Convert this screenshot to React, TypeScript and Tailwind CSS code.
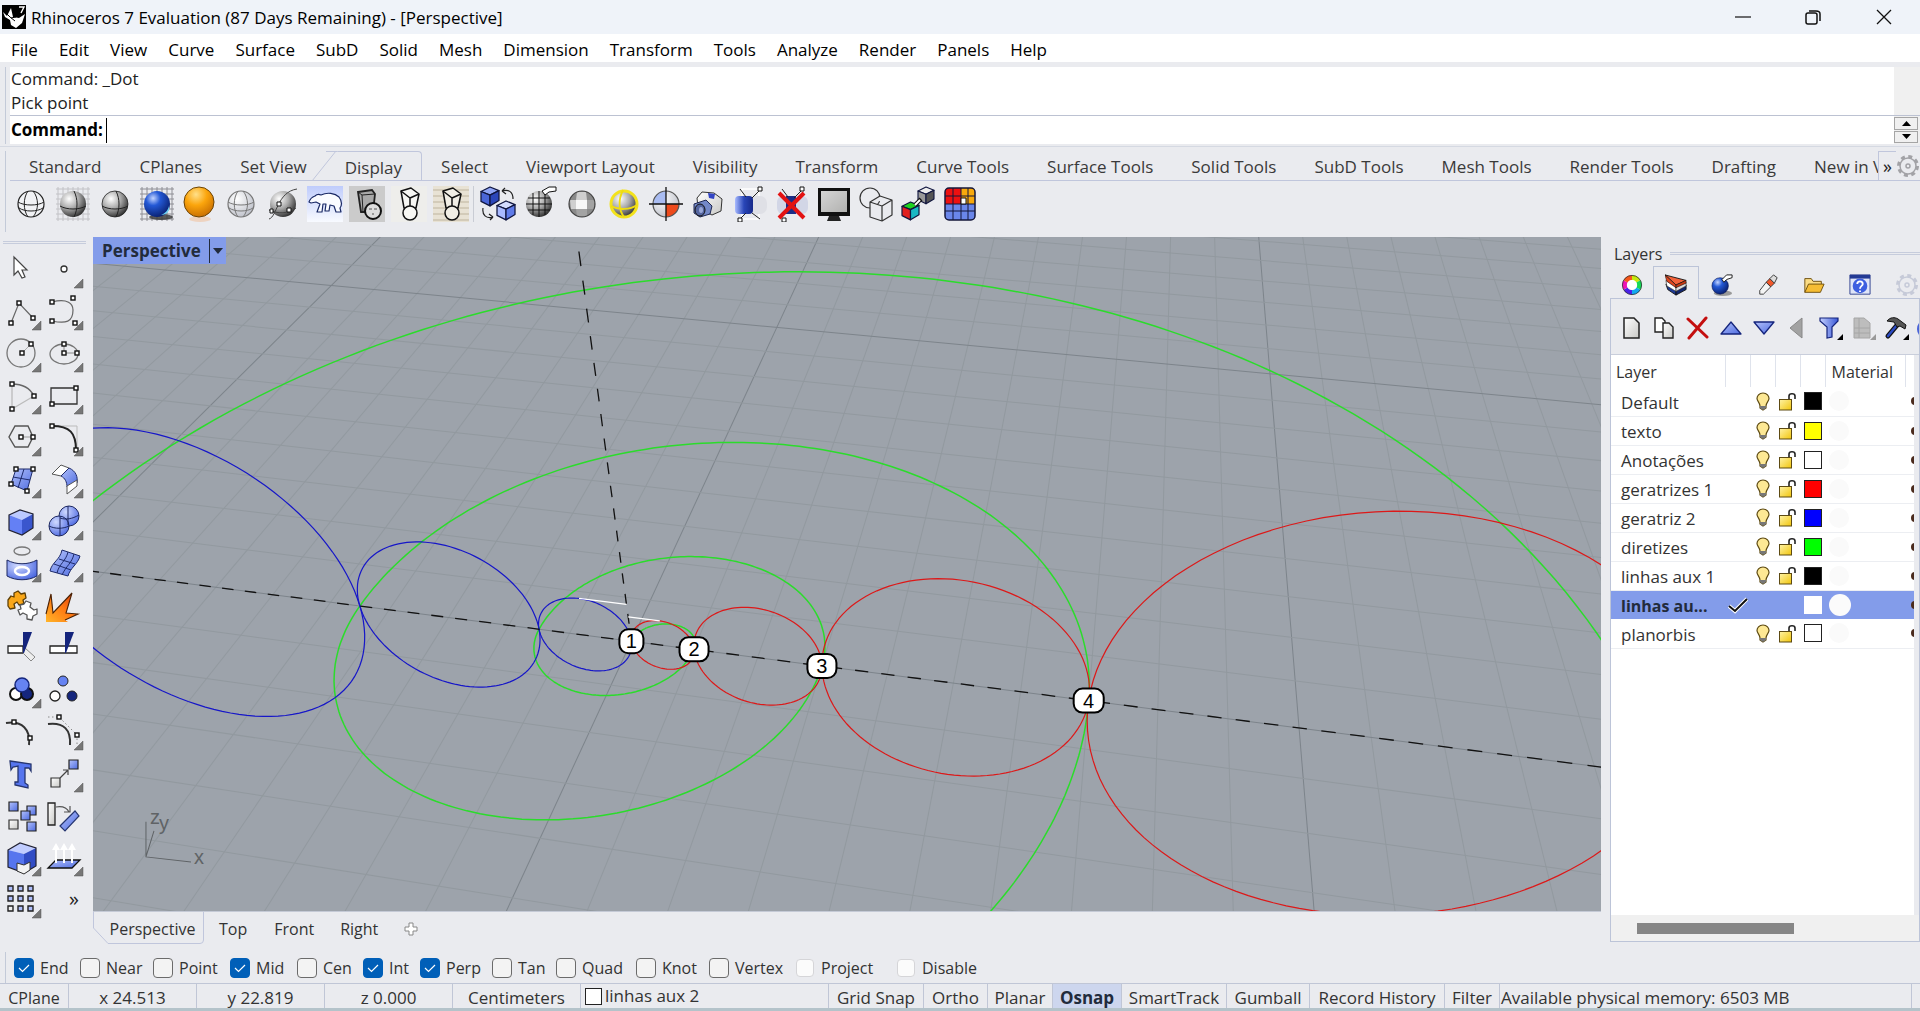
import React from 'react';

type IconProps = { children: React.ReactNode; size?: string; box?: string };

const Glyph: React.FC<IconProps> = ({ children, size = 'w-9 h-9', box = '0 0 36 36' }) => (
  <svg className={`${size} shrink-0`} viewBox={box} fill="none" aria-hidden="true">
    {children}
  </svg>
);

const Gradients: React.FC = () => (
  <svg className="absolute w-0 h-0" aria-hidden="true">
    <defs>
      <radialGradient id="gray" cx="0.35" cy="0.3" r="0.75">
        <stop offset="0" stopColor="#fff" />
        <stop offset="0.5" stopColor="#a9a9a9" />
        <stop offset="1" stopColor="#2c2c2c" />
      </radialGradient>
      <radialGradient id="blueBall" cx="0.35" cy="0.28" r="0.8">
        <stop offset="0" stopColor="#c3d4ff" />
        <stop offset="0.35" stopColor="#2459d6" />
        <stop offset="1" stopColor="#061a66" />
      </radialGradient>
      <radialGradient id="orangeBall" cx="0.4" cy="0.25" r="0.8">
        <stop offset="0" stopColor="#ffe08a" />
        <stop offset="0.45" stopColor="#fba50c" />
        <stop offset="1" stopColor="#c56a00" />
      </radialGradient>
      <radialGradient id="soft" cx="0.35" cy="0.3" r="0.8">
        <stop offset="0" stopColor="#fff" />
        <stop offset="1" stopColor="#b9bcc6" />
      </radialGradient>
      <radialGradient id="peri" cx="0.35" cy="0.3" r="0.8">
        <stop offset="0" stopColor="#cfd9ff" />
        <stop offset="1" stopColor="#4764e0" />
      </radialGradient>
      <linearGradient id="face" x1="0" y1="0" x2="1" y2="1">
        <stop offset="0" stopColor="#b4c2fb" />
        <stop offset="1" stopColor="#4d6be0" />
      </linearGradient>
      <linearGradient id="cyl" x1="0" y1="0" x2="1" y2="0">
        <stop offset="0" stopColor="#a9bbff" />
        <stop offset="0.5" stopColor="#2946b8" />
        <stop offset="1" stopColor="#17298a" />
      </linearGradient>
      <linearGradient id="funnel" x1="0" y1="0" x2="1" y2="0">
        <stop offset="0" stopColor="#c4d0ff" />
        <stop offset="1" stopColor="#3a58d6" />
      </linearGradient>
      <linearGradient id="paper" x1="0" y1="0" x2="1" y2="1">
        <stop offset="0" stopColor="#fff" />
        <stop offset="1" stopColor="#c9c9c6" />
      </linearGradient>
      <linearGradient id="fire" x1="1" y1="0" x2="0" y2="1">
        <stop offset="0" stopColor="#d8380c" />
        <stop offset="0.5" stopColor="#ff7a12" />
        <stop offset="1" stopColor="#ffb52a" />
      </linearGradient>
      <linearGradient id="sky" x1="0" y1="0" x2="0" y2="1">
        <stop offset="0" stopColor="#bfccfc" />
        <stop offset="1" stopColor="#f8faff" />
      </linearGradient>
      <linearGradient id="gold" x1="0" y1="0" x2="1" y2="1">
        <stop offset="0" stopColor="#fff3a6" />
        <stop offset="1" stopColor="#f1c50b" />
      </linearGradient>
    </defs>
  </svg>
);

const Wires: React.FC<{ stroke?: string }> = ({ stroke = '#222' }) => (
  <g stroke={stroke} strokeWidth="1">
    <path d="M5 16C11 20 25 20 31 16M6 22C12 26 24 26 30 22" />
    <path d="M15 5C10 12 10 24 15 31M20 5C26 12 26 24 20 31" />
  </g>
);

const Cube: React.FC<{ x: number; y: number; s: number; top?: string; left?: string; right?: string }> = ({
  x,
  y,
  s,
  top = '#8ea4f5',
  left = '#4a66d8',
  right = '#2b46b9',
}) => (
  <g transform={`translate(${x} ${y}) scale(${s})`} stroke="#10163f" strokeWidth="0.07" strokeLinejoin="round">
    <path d="M0 .25L.5 0L1 .2L.5 .45Z" fill={top} />
    <path d="M0 .25L.5 .45V1.050L0 .8Z" fill={left} />
    <path d="M1 .2L.5 .45V1.050L1 .75Z" fill={right} />
  </g>
);

const Bottle: React.FC<{ fill?: string }> = ({ fill = 'none' }) => (
  <g stroke="#111" strokeWidth="1.5" strokeLinejoin="round" fill={fill}>
    <path d="M10 5L20 2L28 8L25 22H13Z" />
    <path d="M10 5L19 12L28 8M19 12V20" />
    <circle cx="19" cy="27" r="7" />
  </g>
);

const displayTools: { name: string; icon: React.ReactNode }[] = [
  { name: 'Wireframe', icon: <><circle cx="18" cy="18" r="13" fill="#f1f2f5" stroke="#222" strokeWidth="1.2" /><Wires /></> },
  {
    name: 'Shaded',
    icon: (
      <>
        <path d="M1 3H35M1 8H35M1 13H35M1 18H35M1 23H35M1 28H35M1 33H35M3 1V35M8 1V35M13 1V35M18 1V35M23 1V35M28 1V35M33 1V35" stroke="#c2c2c6" />
        <circle cx="18" cy="18" r="13" fill="url(#gray)" />
        <path d="M5 20C12 24 24 24 31 20M19 5C23 13 23 23 19 31" stroke="#222" />
      </>
    ),
  },
  {
    name: 'Shade selected',
    icon: (
      <>
        <circle cx="18" cy="18" r="13" fill="url(#gray)" stroke="#222" strokeWidth="0.8" />
        <path d="M5 20C12 24 24 24 31 20M19 5C23 13 23 23 19 31" stroke="#222" />
      </>
    ),
  },
  {
    name: 'Rendered',
    icon: (
      <>
        <path d="M1 3H35M1 8H35M1 13H35M1 18H35M1 23H35M1 28H35M1 33H35M3 1V35M8 1V35M13 1V35M18 1V35M23 1V35M28 1V35M33 1V35" stroke="#8e8e94" />
        <ellipse cx="22" cy="31" rx="12" ry="3" fill="#333" opacity="0.8" />
        <circle cx="18" cy="18" r="13" fill="url(#blueBall)" />
        <path d="M22 29C27 27 29 24 30 20C31 25 28 29 22 29Z" fill="#6ed3f3" />
      </>
    ),
  },
  {
    name: 'Raytraced',
    icon: (
      <>
        <ellipse cx="19" cy="33" rx="11" ry="3" fill="#f0c9ac" opacity="0.7" />
        <circle cx="18" cy="16" r="15" fill="url(#orangeBall)" stroke="#6b4304" />
      </>
    ),
  },
  { name: 'Ghosted', icon: <><circle cx="18" cy="18" r="13" fill="url(#soft)" stroke="#777" strokeWidth="1.2" /><Wires stroke="#777" /></> },
  {
    name: 'X-Ray',
    icon: (
      <>
        <circle cx="18" cy="18" r="13" fill="url(#gray)" />
        <path d="M4 33C12 31 12 6 32 3M4 24C12 28 24 28 31 22" stroke="#444" />
        <path d="M12 16H16V20H12ZM22 22H26V26H22ZM5 23H8V27H5Z" fill="#fff" stroke="#111" />
      </>
    ),
  },
  {
    name: 'Arctic',
    icon: (
      <>
        <rect width="36" height="36" fill="url(#sky)" />
        <path d="M2 16C3 13 5 11 8 10C10 8 12 8 14 9C20 6 28 7 32 11C35 15 35 19 33 22L34 26H29L27 20L23 19L22 25H18L19 18L16 18L15 26H10L13 18L9 16L4 17Z" fill="#fafbff" stroke="#1b2a66" strokeWidth="1.2" strokeLinejoin="round" />
      </>
    ),
  },
  { name: 'Technical', icon: <><rect width="36" height="36" fill="#cbcbcb" /><path d="M9 6L23 4L26 8L24 26H12Z" fill="#a8a8a8" stroke="#222" strokeWidth="1.8" /><path d="M9 6L13 9L26 8M13 9L14 26" stroke="#222" /><circle cx="24" cy="25" r="8" fill="#ddd" stroke="#111" strokeWidth="2" /><path d="M20 23H23M25 23H28M24 27V29" stroke="#555" /></> },
  { name: 'Artistic', icon: <><rect width="36" height="36" fill="#eeeeeb" /><Bottle fill="#f7f7f3" /></> },
  { name: 'Pen', icon: <><rect width="36" height="36" fill="#e8e2d4" /><path d="M0 4H36M0 10H36M0 16H36M0 22H36M0 28H36M0 34H36" stroke="#d3cbb9" strokeWidth="2" /><Bottle fill="#f1eee5" /></> },
];

const viewTools: { name: string; icon: React.ReactNode }[] = [
  {
    name: 'Set object display mode',
    icon: (
      <>
        <Cube x={1} y={1} s={18} />
        <Cube x={17} y={15} s={18} left="#a9baff" right="#5f7be8" top="#d3dcff" />
        <path d="M22 5C29 3 33 6 33 13M22 5L25 2M22 5L26 8M13 31C6 33 2 29 3 22M13 31L9 28M13 31L10 34" stroke="#222" strokeWidth="1.2" />
      </>
    ),
  },
  { name: 'Shade options', icon: <><circle cx="17" cy="18" r="13" fill="url(#gray)" /><path d="M6 12H28M4 18H30M6 24H28M11 7V29M17 5V31M23 7V29" stroke="#111" /><path d="M20 5L27 1H34V5L27 6L23 9Z" fill="#fff" stroke="#111" /></> },
  {
    name: 'Flat shade',
    icon: (
      <>
        <circle cx="18" cy="18" r="13" fill="#8a8a8a" />
        <path d="M13 6H22L23 14H12ZM6 14H12V23H7Z" fill="#cfcfcf" />
        <path d="M12 14H23V23H12Z" fill="#f7f7f7" />
        <path d="M23 14H30V23H23ZM12 23H23V30H13Z" fill="#a3a3a3" />
        <circle cx="18" cy="18" r="13" stroke="#444" strokeWidth="1.2" />
      </>
    ),
  },
  { name: 'Highlight', icon: <><circle cx="18" cy="18" r="13" fill="url(#gray)" stroke="#f3e21c" strokeWidth="3" /><path d="M5 20C12 24 24 24 31 19M17 4C12 14 13 24 18 31" stroke="#efdc10" strokeWidth="2" /></> },
  {
    name: 'Zebra',
    icon: (
      <>
        <circle cx="18" cy="18" r="13" fill="url(#soft)" />
        <path d="M18 18V5A13 13 0 0 0 5 18Z" fill="#a9bcf2" />
        <path d="M18 18H31A13 13 0 0 1 18 31Z" fill="#ee4a1c" />
        <circle cx="18" cy="18" r="13" stroke="#555" strokeWidth="1.2" />
        <path d="M18 1V35M1 18H35" stroke="#111" strokeWidth="1.3" />
      </>
    ),
  },
  {
    name: 'Capture viewport',
    icon: (
      <>
        <path d="M7 12L12 6L24 7L32 13L31 25L22 29L8 22Z" fill="url(#paper)" stroke="#333" />
        <path d="M18 7L25 8L24 13L19 12Z" fill="#3345c4" />
        <path d="M4 18L16 14L22 20L20 28L10 31L4 27Z" fill="#7388c8" stroke="#1c2550" />
        <ellipse cx="10" cy="24" rx="5" ry="6" fill="#5465a0" stroke="#111" />
        <ellipse cx="11" cy="24" rx="2" ry="3" fill="#9aa8d8" />
      </>
    ),
  },
  { name: 'Clipping plane', icon: <><path d="M10 3H27V33H10Z" stroke="#fff" strokeWidth="1.5" /><rect x="18" y="10" width="17" height="18" rx="7" fill="#dfe0e6" /><rect x="3" y="10" width="18" height="18" rx="4" fill="url(#cyl)" /><path d="M8 3L14 11M28 4L20 12M8 33L14 27M28 33L20 27" stroke="#222" /><path d="M26 1H30V5H26ZM6 32H10V36H6Z" fill="#fff" stroke="#111" /></> },
  {
    name: 'Disable clipping plane',
    icon: (
      <>
        <rect x="3" y="10" width="31" height="18" rx="6" fill="#d2d6e6" />
        <rect x="12" y="10" width="10" height="18" fill="#1b2c86" />
        <path d="M8 3L14 11M28 4L20 12" stroke="#222" />
        <path d="M26 1H30V5H26ZM8 32H12V36H8Z" fill="#fff" stroke="#111" />
        <path d="M5 7L30 32M30 7L5 32" stroke="#e31212" strokeWidth="4" />
      </>
    ),
  },
  { name: 'Full screen', icon: <><path d="M2 2H34V30H2Z" fill="#111" /><path d="M5 5H31V26H5Z" fill="url(#paper)" /><path d="M5 5H31V26H5Z" fill="#888" opacity="0.35" /><path d="M13 30H23L25 35H11Z" fill="#222" /></> },
  { name: 'Wireframe shapes', icon: <><circle cx="12" cy="12" r="10" stroke="#333" strokeWidth="1.2" /><path d="M12 16L22 10L34 14V29L24 35L12 31ZM12 16L24 20L34 14M24 20V35" fill="#e9eaee" stroke="#333" strokeWidth="1.2" strokeLinejoin="round" /></> },
  { name: 'Match display', icon: <><Cube x={2} y={16} s={17} top="#1fd11f" left="#e02020" right="#19b8c4" /><Cube x={18} y={1} s={16} top="#eee" left="#999" right="#555" /><path d="M15 19L21 13" stroke="#111" strokeWidth="4" /><path d="M15 19L20 14" stroke="#fff" strokeWidth="2" /></> },
  {
    name: 'Layout grid',
    icon: (
      <>
        <rect x="3" y="2" width="30" height="32" rx="4" fill="#6a86ea" />
        <path d="M3 6A4 4 0 0 1 7 2H19V18H3Z" fill="#ee1010" />
        <path d="M19 2H29A4 4 0 0 1 33 6V18H19Z" fill="#f8a90c" />
        <path d="M3 10H33M3 18H33M3 25H33M11 2V34M19 2V34M26 2V34" stroke="#15173a" />
        <rect x="3" y="2" width="30" height="32" rx="4" stroke="#15173a" strokeWidth="1.5" />
        <path d="M19 12H24V18H19Z" fill="#fff" stroke="#111" />
      </>
    ),
  },
];

const Dots: React.FC<{ at: [number, number][] }> = ({ at }) => (
  <g fill="#fff" stroke="#111" strokeWidth="1.4">
    {at.map(([x, y]) => (
      <rect key={`${x}-${y}`} x={x - 2} y={y - 2} width="4" height="4" />
    ))}
  </g>
);

// side tools are drawn on a 42 unit cell, "more" adds the fly-out corner
const sideTools: { name: string; more?: boolean; icon: React.ReactNode }[] = [
  { name: 'Select', icon: <path d="M14 9V27L18 23L22 30L25 29L22 22H27Z" fill="#fff" stroke="#444" strokeWidth="1.2" /> },
  { name: 'Point', more: true, icon: <circle cx="22" cy="21" r="3" fill="#fff" stroke="#333" strokeWidth="1.3" /> },
  { name: 'Polyline', more: true, icon: <><path d="M11 33L19 13L33 28" stroke="#666" strokeWidth="1.2" /><Dots at={[[11, 33], [19, 13], [33, 28]]} /></> },
  { name: 'Curve', more: true, icon: <><path d="M10 12C26 8 31 14 31 20C31 32 24 34 10 31" stroke="#666" strokeWidth="1.2" /><Dots at={[[10, 12], [31, 8], [10, 31], [33, 33]]} /></> },
  { name: 'Circle', more: true, icon: <><circle cx="21" cy="21" r="14" stroke="#777" strokeWidth="1.3" /><path d="M22 21L31 12" stroke="#aaa" /><Dots at={[[22, 21], [31, 12]]} /></> },
  { name: 'Ellipse', more: true, icon: <><ellipse cx="22" cy="22" rx="14" ry="10" stroke="#777" strokeWidth="1.3" /><path d="M22 12V21H35" stroke="#888" /><Dots at={[[22, 12], [22, 21], [35, 21]]} /></> },
  { name: 'Arc', more: true, icon: <><path d="M12 35V10M12 35L34 22" stroke="#bbb" strokeWidth="1.3" /><path d="M12 10C22 10 30 14 34 22" stroke="#666" strokeWidth="1.3" /><Dots at={[[12, 10], [34, 22], [12, 35]]} /></> },
  { name: 'Rectangle', more: true, icon: <><path d="M9 14H35V30H9Z" stroke="#333" strokeWidth="1.3" /><Dots at={[[34, 14], [10, 30]]} /></> },
  { name: 'Polygon', more: true, icon: <><path d="M15 10H28L33 21L28 31H15L9 21Z" stroke="#555" strokeWidth="1.4" /><path d="M21 21H33" stroke="#999" /><Dots at={[[21, 21], [33, 21]]} /></> },
  { name: 'Fillet', more: true, icon: <><path d="M10 10H35V34" stroke="#bbb" /><path d="M10 10C28 10 34 17 34 34" stroke="#222" strokeWidth="2" /><Dots at={[[10, 10], [34, 34]]} /></> },
  { name: 'Surface from points', more: true, icon: <><path d="M16 11H33L27 33L11 26Z" fill="url(#face)" stroke="#1e2b6b" /><path d="M24 11L18 30M13 19L30 22" stroke="#1e2b6b" /><Dots at={[[16, 11], [33, 11], [11, 26], [27, 33]]} /></> },
  { name: 'Blend surface', more: true, icon: <><path d="M10 16L19 7L27 10L19 18Z" fill="#fff" stroke="#555" /><path d="M27 10C34 13 36 19 35 25L25 29C25 24 23 20 19 18Z" fill="url(#face)" stroke="#1e2b6b" /><path d="M25 28L35 22V28L25 36Z" fill="#fff" stroke="#555" /></> },
  { name: 'Box', more: true, icon: <><path d="M9 15L20 10L33 14L22 20Z" fill="#bccaff" /><path d="M9 15L22 20V35L9 30Z" fill="#6480f5" /><path d="M33 14L22 20V35L33 28Z" fill="#3a56cd" /><path d="M9 15L20 10L33 14V28L22 35L9 30Z" stroke="#223" strokeWidth="1.2" /></> },
  { name: 'Boolean union', more: true, icon: <><circle cx="27" cy="16" r="10" fill="url(#peri)" stroke="#1c2760" /><circle cx="17" cy="26" r="10" fill="url(#peri)" stroke="#1c2760" /><path d="M7 26C13 29 21 29 27 26M18 16V36M26 6V25M18 18C24 20 30 19 37 15" stroke="#1c2760" /></> },
  { name: 'Project curve', more: true, icon: <><ellipse cx="22" cy="9" rx="8" ry="4" stroke="#777" strokeWidth="1.3" /><path d="M7 18C16 23 28 23 37 18V34C28 39 16 39 7 34Z" fill="url(#peri)" stroke="#1c2760" /><ellipse cx="22" cy="29" rx="7" ry="4" stroke="#fff" strokeWidth="2.5" /></> },
  { name: 'Surface tools', more: true, icon: <><path d="M20 8L38 14C36 22 28 26 26 34L8 29C10 20 18 18 20 8Z" fill="url(#face)" stroke="#1e2b6b" /><path d="M26 10C24 19 17 22 15 31M32 12C30 21 24 24 20 33M17 17L33 22M12 22L29 28" stroke="#1e2b6b" /></> },
  { name: 'Puzzle', icon: <><path d="M8 16L11 12L14 13L14 9L18 7L21 10L25 9L26 14L23 16L24 20L19 21L17 18L14 20L15 24L10 25L8 22Z" fill="#f9a719" stroke="#5d3f07" strokeWidth="1.3" strokeLinejoin="round" /><path d="M20 21L24 20L26 17L31 19L30 23L34 26L37 25L37 30L33 32L32 36L27 35L27 31L23 29L20 31L18 26L21 25Z" fill="#fff" stroke="#555" strokeWidth="1.3" strokeLinejoin="round" /></> },
  { name: 'Explode', icon: <><path d="M4 38V30L9 10L11 29L30 9L24 29L36 30L23 36L26 38Z" fill="url(#fire)" /><path d="M4 30L9 10L11 29L30 9L24 29L36 30L23 36" stroke="#4a2206" strokeWidth="1.1" /></> },
  { name: 'Trim', icon: <><path d="M8 20H23V27H8Z" fill="#fff" stroke="#222" strokeWidth="1.3" /><path d="M25 22L35 31L31 35L23 27Z" fill="#eee" stroke="#888" /><path d="M23 6H32L24 27H23Z" fill="#14247c" /></> },
  { name: 'Split', icon: <><path d="M8 20H35V27H8Z" fill="#fff" stroke="#222" strokeWidth="1.3" /><path d="M23 6H32L24 27H23Z" fill="#14247c" /></> },
  { name: 'Group', more: true, icon: <><circle cx="16" cy="26" r="6" fill="#fff" stroke="#111" strokeWidth="2" /><circle cx="27" cy="26" r="6" fill="#15267d" stroke="#111" strokeWidth="2" /><circle cx="22" cy="17" r="7" fill="#6683f2" stroke="#15267d" strokeWidth="1.5" /></> },
  { name: 'Ungroup', icon: <><circle cx="21" cy="13" r="5" fill="#6683f2" stroke="#222" /><circle cx="13" cy="28" r="5" fill="#fff" stroke="#222" strokeWidth="1.3" /><circle cx="30" cy="28" r="5" fill="#15267d" stroke="#222" /></> },
  { name: 'Edit points', icon: <><path d="M6 13C22 10 31 20 29 35" stroke="#333" strokeWidth="2" /><Dots at={[[14, 12], [30, 28]]} /></> },
  { name: 'Control points', more: true, icon: <><path d="M6 14C22 12 29 20 28 35" stroke="#333" strokeWidth="2" /><path d="M6 7H17L35 25V35" stroke="#888" strokeDasharray="1.5 2.5" /><Dots at={[[17, 7], [35, 25]]} /></> },
  { name: 'Text', icon: <path d="M10 9L31 12V19L29 16L25 16V31L28 33V36L15 33V30L18 30V14L13 15L11 18Z" fill="#5675ee" stroke="#26356f" strokeWidth="1.3" /> },
  { name: 'Move', more: true, icon: <><path d="M9 26H18V35H9Z" fill="url(#paper)" stroke="#333" strokeWidth="1.2" /><path d="M27 8H36V17H27Z" fill="url(#face)" stroke="#222" strokeWidth="1.2" /><path d="M18 26L26 18M21 18H26V23" stroke="#444" strokeWidth="1.2" /></> },
  { name: 'Copy', icon: <><g fill="url(#face)" stroke="#222" strokeWidth="1.2"><path d="M9 8H18V17H9Z" /><path d="M27 12H36V21H27Z" /><path d="M21 17H30V26H21Z" /><path d="M27 28H36V37H27Z" /></g><path d="M9 26H18V35H9Z" fill="url(#paper)" stroke="#333" strokeWidth="1.2" /></> },
  { name: 'Rotate', icon: <><path d="M6 9H13V31H6Z" fill="url(#paper)" stroke="#222" strokeWidth="1.3" /><path d="M18 32L33 17L37 22L23 37Z" fill="url(#face)" stroke="#26356f" strokeWidth="1.2" /><path d="M14 13C20 12 25 14 27 18M22 18H28V12" stroke="#555" strokeWidth="1.2" /></> },
  { name: 'Solid edit', more: true, icon: <><path d="M8 14L20 7L36 12L24 18Z" fill="#c1cdff" /><path d="M8 14L24 18V37L8 31Z" fill="#5675ee" /><path d="M36 12L24 18V37L36 30Z" fill="#314cc4" /><path d="M8 14L20 7L36 12V30L24 37L8 31Z" stroke="#223" strokeWidth="1.2" /><path d="M17 27L24 29L30 26V34L24 38L17 35Z" fill="#f3f3f3" stroke="#333" /></> },
  { name: 'Extrude', more: true, icon: <><path d="M14 24H38L30 32H6Z" fill="url(#face)" stroke="#111" strokeWidth="1.3" /><path d="M14 27V12M22 27V12M30 27V12" stroke="#fff" strokeWidth="2" /><path d="M10 14L14 7L18 14ZM18 14L22 7L26 14ZM26 14L30 7L34 14Z" fill="#fff" /></> },
  {
    name: 'Array',
    more: true,
    icon: (
      <>
        <g fill="#aebdfa" stroke="#222" strokeWidth="1.4">
          <path d="M8 8H13V13H8ZM18 8H23V13H18ZM28 8H33V13H28ZM8 18H13V23H8ZM18 18H23V23H18ZM28 18H33V23H28ZM18 28H23V33H18ZM28 28H33V33H28Z" />
        </g>
        <path d="M8 28H13V33H8Z" fill="#eee" stroke="#222" strokeWidth="1.4" />
      </>
    ),
  },
];

// perspective projection of world units to the drawing area
const project = (x: number, y: number, z = 0): [number, number] => {
  const w = 1 - 0.006828 * x + 0.035 * y - 0.02933 * z;
  return [
    (538.73 + 58.433 * x + 38.459 * y - 22.25 * z) / w,
    (403.62 + 5.309 * x - 28.176 * y - 59.74 * z) / w,
  ];
};

const toPath = (pts: [number, number][]) =>
  'M' + pts.map(([x, y]) => `${x.toFixed(1)} ${y.toFixed(1)}`).join('L');

const arc = (from: number, to: number, start: number, end: number, plane: 'xy' | 'xz') => {
  const c = (from + to) / 2;
  const r = (to - from) / 2;
  const steps = 120;
  const pts: [number, number][] = [];
  for (let i = 0; i <= steps; i++) {
    const t = ((start + ((end - start) * i) / steps) * Math.PI) / 180;
    const a = c + r * Math.cos(t);
    const b = r * Math.sin(t);
    pts.push(plane === 'xy' ? project(a, b) : project(a, 0, b));
  }
  return toPath(pts);
};

const dashes = (start: number, end: number, at: (n: number) => [number, number]) => {
  let d = '';
  for (let n = start; n < end; n += 0.4) d += toPath([at(n), at(n + 0.2)]);
  return d;
};

const range = (a: number, b: number) => Array.from({ length: b - a + 1 }, (_, i) => a + i);

const gridLines = [
  ...range(-22, 22).map((n) => ({ major: n % 10 === 0, d: toPath([project(n, -9), project(n, 24)]) })),
  ...range(-9, 24).map((n) => ({ major: n % 10 === 0, d: toPath([project(-22, n), project(22, n)]) })),
];

const labels = [
  { text: '1', at: project(0, 0), w: 24 },
  { text: '2', at: project(1, 0), w: 29 },
  { text: '3', at: project(3, 0), w: 29 },
  { text: '4', at: project(7, 0), w: 30 },
];

const Drawing: React.FC = () => (
  <svg className="absolute inset-0 w-full h-full" viewBox="0 0 1508 673" preserveAspectRatio="xMidYMid slice" fill="none">
    {gridLines.map((l) => (
      <path key={l.d} d={l.d} stroke={l.major ? '#7d848b' : '#92999f'} strokeWidth="1" />
    ))}
    <g stroke="#2bdc2b" strokeWidth="1.5">
      <path d={arc(0, 1, 0, 180, 'xy')} />
      <path d={arc(-1.5, 3, 0, 180, 'xy')} />
      <path d={arc(-4.5, 7, 0, 180, 'xy')} />
      <path d={arc(-10.5, 15, 0, 180, 'xy')} />
      <path d={arc(-1.5, 1, 180, 360, 'xy')} />
      <path d={arc(-4.5, 3, 180, 360, 'xy')} />
      <path d={arc(-10.5, 7, 270, 360, 'xy')} />
    </g>
    <g stroke="#1616c8" strokeWidth="1.2">
      <path d={arc(-1.5, 0, 0, 360, 'xz')} />
      <path d={arc(-4.5, -1.5, 0, 360, 'xz')} />
      <path d={arc(-10.5, -4.5, 0, 360, 'xz')} />
    </g>
    <g stroke="#dd1818" strokeWidth="1.2">
      <path d={arc(0, 1, 0, 360, 'xz')} />
      <path d={arc(1, 3, 0, 360, 'xz')} />
      <path d={arc(3, 7, 0, 360, 'xz')} />
      <path d={arc(7, 15, 0, 360, 'xz')} />
    </g>
    <g stroke="#111" strokeWidth="1.3">
      <path d={dashes(-12.09, 20, (n) => project(n, 0))} />
      <path d={dashes(-0.04, 8, (n) => project(0, 0, n))} />
    </g>
    <g stroke="#fff" strokeWidth="1.3">
      <path d={toPath([project(-0.75, 0, 0.75), project(0, 0, 0.75)])} />
      <path d={toPath([project(0, 0, 0.5), project(0.5, 0, 0.5)])} />
    </g>
    {labels.map((l) => (
      <g key={l.text}>
        <rect x={l.at[0] - l.w / 2} y={l.at[1] - 12} width={l.w} height="24" rx="9" fill="#fff" stroke="#000" strokeWidth="2" />
        <text x={l.at[0]} y={l.at[1] + 7} textAnchor="middle" fill="#000" className="font-['Liberation_Sans',sans-serif] text-[20px]">
          {l.text}
        </text>
      </g>
    ))}
    <path d="M54 584V619L99 624M54 619L62 593" stroke="#5f6366" strokeWidth="1" />
    <g fill="#606366" className="font-['Liberation_Sans',sans-serif] text-[20px]">
      <text x="58" y="586">z</text>
      <text x="67" y="592">y</text>
      <text x="102" y="626">x</text>
    </g>
  </svg>
);

const menus = ['File', 'Edit', 'View', 'Curve', 'Surface', 'SubD', 'Solid', 'Mesh', 'Dimension', 'Transform', 'Tools', 'Analyze', 'Render', 'Panels', 'Help'];

const toolbarTabs = ['Standard', 'CPlanes', 'Set View', 'Display', 'Select', 'Viewport Layout', 'Visibility', 'Transform', 'Curve Tools', 'Surface Tools', 'Solid Tools', 'SubD Tools', 'Mesh Tools', 'Render Tools', 'Drafting', 'New in V7'];

const layers = [
  { name: 'Default', color: 'bg-black' },
  { name: 'texto', color: 'bg-[#ffff00]' },
  { name: 'Anotações', color: 'bg-white' },
  { name: 'geratrizes 1', color: 'bg-[#ff0000]' },
  { name: 'geratriz 2', color: 'bg-[#0000ff]' },
  { name: 'diretizes', color: 'bg-[#00ff00]' },
  { name: 'linhas aux 1', color: 'bg-black' },
  { name: 'linhas au...', color: 'bg-white', current: true },
  { name: 'planorbis', color: 'bg-white' },
];

const snaps = [
  { name: 'End', on: true, width: 'w-[66px]' },
  { name: 'Near', width: 'w-[73px]' },
  { name: 'Point', width: 'w-[77px]' },
  { name: 'Mid', on: true, width: 'w-[67px]' },
  { name: 'Cen', width: 'w-[66px]' },
  { name: 'Int', on: true, width: 'w-[57px]' },
  { name: 'Perp', on: true, width: 'w-[72px]' },
  { name: 'Tan', width: 'w-16' },
  { name: 'Quad', width: 'w-20' },
  { name: 'Knot', width: 'w-[73px]' },
  { name: 'Vertex', width: 'w-[86px]' },
  { name: 'Project', faint: true, width: 'w-[101px]' },
  { name: 'Disable', faint: true, width: 'w-[101px]' },
];

const Gear: React.FC<{ color: string }> = ({ color }) => (
  <Glyph size="w-6 h-6" box="0 0 24 24">
    <circle cx="12" cy="12" r="9.500" stroke={color} strokeWidth="3" strokeDasharray="4 3.46" />
    <circle cx="12" cy="12" r="8" stroke={color} strokeWidth="1.5" />
    <circle cx="12" cy="12" r="2" stroke={color} strokeWidth="1.5" />
  </Glyph>
);

const TitleBar: React.FC = () => (
  <header className="flex h-[34px] shrink-0 items-center bg-[#eff3f9] text-[17px] text-black">
    <Glyph size="w-6 h-6 ml-[2px]" box="0 0 24 24">
      <rect width="24" height="24" fill="#000" />
      <path d="M1 7L5 11L9 3L11 12L17 13L23 9L20 18L14 23L9 20L8 15L3 12Z" fill="#fff" />
      <path d="M4 8L8 12L13 16M9 13L14 12" stroke="#000" strokeWidth="1" />
      <path d="M17 2H22L19 8" stroke="#fff" strokeWidth="1.4" />
    </Glyph>
    <h1 className="ml-[5px] flex-1 pt-px whitespace-nowrap">Rhinoceros 7 Evaluation (87 Days Remaining) - [Perspective]</h1>
    <div className="flex h-full">
      <button aria-label="Minimize" className="flex w-[70px] items-center justify-center">
        <Glyph size="w-4 h-4" box="0 0 16 16"><path d="M0 8H16" stroke="#111" strokeWidth="1.2" /></Glyph>
      </button>
      <button aria-label="Restore" className="flex w-[70px] items-center justify-center">
        <Glyph size="w-4 h-4" box="0 0 16 16"><rect x="1" y="4" width="11" height="11" rx="2" stroke="#111" strokeWidth="1.5" /><path d="M4 2H11C13 2 15 3 15 5V12" stroke="#111" strokeWidth="1.5" /></Glyph>
      </button>
      <button aria-label="Close" className="flex w-[72px] items-center justify-center">
        <Glyph size="w-4 h-4" box="0 0 16 16"><path d="M1 1L15 15M15 1L1 15" stroke="#111" strokeWidth="1.3" /></Glyph>
      </button>
    </div>
  </header>
);

const CommandArea: React.FC = () => (
  <section className="mt-[5px] ml-[5px] flex border-l border-[#c3cad8] pl-1 text-[17px]">
    <div className="flex-1">
      <div className="h-12 bg-white pl-px leading-6 text-[#222]">
        <p>Command: _Dot</p>
        <p>Pick point</p>
      </div>
      <div className="flex h-[29px] items-center border-t border-[#bcc2d2] bg-white pl-px">
        <label htmlFor="command" className="font-bold text-black">Command:</label>
        <span className="ml-[3px] h-[25px] w-px bg-black" />
        <input id="command" className="h-6 flex-1 bg-transparent outline-none" />
      </div>
    </div>
    <div className="flex w-[26px] flex-col bg-[#f0f0f0]">
      <div className="h-12" />
      <div className="flex flex-1 flex-col gap-px border-t border-[#bcc2d2] py-px pr-[2px]">
        <button aria-label="Previous line" className="flex flex-1 items-center justify-center border border-[#a5a5a5] bg-[#f0f0f0]">
          <Glyph size="w-[9px] h-[5px]" box="0 0 9 5"><path d="M0 5L4.5 0L9 5Z" fill="#000" /></Glyph>
        </button>
        <button aria-label="Next line" className="flex flex-1 items-center justify-center border border-[#a5a5a5] bg-[#f0f0f0]">
          <Glyph size="w-[9px] h-[5px]" box="0 0 9 5"><path d="M0 0L4.5 5L9 0Z" fill="#000" /></Glyph>
        </button>
      </div>
    </div>
  </section>
);

const Toolbars: React.FC = () => (
  <section className="mt-[2px] border-t border-[#d5d9e2] pt-1">
    <div className="ml-[5px] h-[81px] border-l border-[#c3cad8] pl-1">
      <div className="flex h-[30px] border-b border-[#c0c6dc]">
        <div className="flex min-w-0 flex-1 overflow-hidden text-[17px] text-[#3a3a3a]">
          {toolbarTabs.map((tab) =>
            tab === 'Display' ? (
              <button key={tab} className="relative h-[30px] shrink-0 rounded-tr border-t border-r border-[#c0c6dc] bg-[#eaebef] px-[19px] pt-[2px] whitespace-nowrap">
                <svg className="absolute -top-px -left-[14px] h-[30px] w-[26px]" viewBox="0 0 26 30" fill="none" aria-hidden="true">
                  <path d="M0 30L26 0V30Z" fill="#eaebef" />
                  <path d="M26 0H24L0 30" stroke="#c0c6dc" />
                </svg>
                <span className="relative">{tab}</span>
              </button>
            ) : (
              <button key={tab} className="shrink-0 px-[19px] pt-[3px] whitespace-nowrap">{tab}</button>
            ),
          )}
        </div>
        <button aria-label="More tabs" className="w-[18px] border-t border-l border-[#c0c6dc] text-lg leading-none text-[#222]">»</button>
        <button aria-label="Toolbar options" className="flex w-6 items-center justify-center"><Gear color="#a2a2a6" /></button>
      </div>
      <div className="flex items-center pt-[5px] pl-[3px]">
        <div className="flex gap-[6px]">
          {displayTools.map((t) => (
            <button key={t.name} aria-label={t.name}><Glyph>{t.icon}</Glyph></button>
          ))}
        </div>
        <div className="mr-[6px] ml-1 h-9 w-px bg-[#c9ccd4]" />
        <div className="flex gap-[6px]">
          {viewTools.map((t) => (
            <button key={t.name} aria-label={t.name}><Glyph>{t.icon}</Glyph></button>
          ))}
        </div>
      </div>
    </div>
  </section>
);

const SideBar: React.FC = () => (
  <aside className="w-[93px] shrink-0 pt-1">
    <div className="mr-[7px] ml-[3px] h-[3px] border-y border-[#c6ccdc]" />
    <div className="grid w-[84px] grid-cols-2 pt-1">
      {sideTools.map((t) => (
        <button key={t.name} aria-label={t.name} className="h-[42px]">
          <Glyph size="w-[42px] h-[42px]" box="0 0 42 42">
            {t.icon}
            {t.more && <path d="M41 31V40H32Z" fill="#777" stroke="#555" strokeWidth="0.5" />}
          </Glyph>
        </button>
      ))}
      <button aria-label="More tools" className="h-[42px] pl-[22px] text-xl text-[#222]">»</button>
    </div>
  </aside>
);

const Viewport: React.FC = () => (
  <main className="flex min-w-0 flex-1 flex-col">
    <div className="relative min-h-0 flex-1 overflow-hidden bg-[#9da3ab]">
      <Drawing />
      <div className="absolute top-0 left-0 flex h-[27px] items-center bg-[#839cea] text-[#222b3c]">
        <span className="w-[116px] pt-px pl-[9px] text-[17px] font-bold">Perspective</span>
        <button aria-label="Viewport menu" className="flex h-6 w-[17px] items-center justify-center border-l border-[#222b3c]">
          <Glyph size="w-[10px] h-[6px]" box="0 0 10 6"><path d="M0 0H10L5 6Z" fill="#222b3c" /></Glyph>
        </button>
      </div>
    </div>
    <nav className="flex h-[41px] shrink-0 items-start border-t border-[#c5cad6] text-base text-[#333]">
      <button className="relative h-8 w-[111px] pt-[2px] pl-2">
        <svg className="absolute inset-0 h-full w-full" viewBox="0 0 111 32" fill="none" aria-hidden="true">
          <path d="M.5 0V16L15 31.5H107Q110.500 31.5 110.500 28V0" stroke="#c0c6dc" />
        </svg>
        <span className="relative">Perspective</span>
      </button>
      <button className="ml-[15px] h-8 pt-[2px]">Top</button>
      <button className="ml-[27px] h-8 pt-[2px]">Front</button>
      <button className="ml-[26px] h-8 pt-[2px]">Right</button>
      <button aria-label="New viewport" className="ml-[26px] flex h-8 items-center pt-[2px]">
        <Glyph size="w-[14px] h-[14px]" box="0 0 14 14"><path d="M5 1H9V5H13V9H9V13H5V9H1V5H5Z" fill="#fff" stroke="#888" /></Glyph>
      </button>
    </nav>
  </main>
);

const panelTabs: { name: string; icon: React.ReactNode }[] = [
  {
    name: 'Properties',
    icon: (
      <>
        <g strokeWidth="5">
          <path d="M12 4A8 8 0 0 1 19 8" stroke="#c6e80e" /><path d="M19 8A8 8 0 0 1 19 16" stroke="#15d957" />
          <path d="M19 16A8 8 0 0 1 12 20" stroke="#12a8f0" /><path d="M12 20A8 8 0 0 1 5 16" stroke="#4a22e8" />
          <path d="M5 16A8 8 0 0 1 5 8" stroke="#ee14b4" /><path d="M5 8A8 8 0 0 1 12 4" stroke="#f5561a" />
        </g>
        <circle cx="12" cy="12" r="10.5" stroke="#222" strokeWidth="0.8" />
        <circle cx="12" cy="12" r="5.500" fill="#fff" />
      </>
    ),
  },
  {
    name: 'Layers',
    icon: (
      <>
        <path d="M1 11L12 18V23L3 17Z" fill="#1d3a96" stroke="#111" /><path d="M23 12L12 18V23L23 17Z" fill="#13266e" stroke="#111" />
        <path d="M1 7L12 14V19L2 13Z" fill="#fff" stroke="#111" strokeWidth="0.6" /><path d="M23 9L12 14V19L23 13Z" fill="#ddd" stroke="#111" strokeWidth="0.6" />
        <path d="M0 1L23 7L12 12Z" fill="#f4623a" stroke="#111" /><path d="M0 1L12 12V15L2 8Z" fill="#e0451e" stroke="#111" strokeWidth="0.6" /><path d="M23 7V10L12 15V12Z" fill="#c93a14" stroke="#111" strokeWidth="0.6" />
      </>
    ),
  },
  { name: 'Materials', icon: <><ellipse cx="13" cy="21" rx="10" ry="3" fill="#999" /><circle cx="10" cy="13" r="9" fill="url(#blueBall)" stroke="#0a1550" strokeWidth="0.6" /><path d="M12 6L17 1H23V4L17 6L14 9Z" fill="#fff" stroke="#111" /></> },
  { name: 'Libraries', icon: <><path d="M3 18L10 9L15 14L7 22L3 22Z" fill="#f4f4f4" stroke="#333" /><path d="M10 9L14 5L19 10L15 14Z" fill="#f0572a" stroke="#333" /><path d="M14 5L18 1L22 4L19 10Z" fill="#ddd" stroke="#333" /></> },
  { name: 'Files', icon: <><path d="M2 20V5H9L11 8H20V11" fill="#fbdc84" stroke="#6a4b0b" /><path d="M2 20L6 11H23L19 20Z" fill="#f6bd34" stroke="#6a4b0b" /></> },
  { name: 'Help', icon: <><path d="M1 1H23V22H1Z" fill="#dfe5f8" stroke="#2b3d8c" /><path d="M1 1H23V5H1Z" fill="#233a94" /><circle cx="12" cy="13" r="8" fill="#3d5fe0" /><path d="M9 11C9 7 15 7 15 11C15 13 12 13 12 16M12 18V19.5" stroke="#fff" strokeWidth="2" /></> },
];

const layerTools: { name: string; more?: string; icon: React.ReactNode }[] = [
  { name: 'New layer', icon: <path d="M4 2H14L19 7V22H4Z" fill="url(#paper)" stroke="#222" strokeWidth="1.5" /> },
  { name: 'New sublayer', icon: <><path d="M2 2H9L12 5V16H2Z" fill="#fff" stroke="#222" strokeWidth="1.4" /><path d="M10 7H16L20 11V22H10Z" fill="url(#paper)" stroke="#222" strokeWidth="1.4" /></> },
  { name: 'Delete layer', icon: <path d="M2 3L21 21M20 2L3 22" stroke="#c40f0f" strokeWidth="3" strokeLinecap="round" /> },
  { name: 'Move up', icon: <path d="M2 18L12 6L22 18Z" fill="url(#face)" stroke="#14247c" strokeWidth="1.3" strokeLinejoin="round" /> },
  { name: 'Move down', icon: <path d="M2 6L12 18L22 6Z" fill="url(#face)" stroke="#14247c" strokeWidth="1.3" strokeLinejoin="round" /> },
  { name: 'Move out', icon: <path d="M5 12L17 2V22Z" fill="#a2a2a2" stroke="#888" /> },
  { name: 'Filter', more: '#000', icon: <path d="M2 2H20V5L14 11V21L9 22V11L2 5Z" fill="url(#funnel)" stroke="#14247c" strokeWidth="1.2" /> },
  { name: 'Layer states', more: '#999', icon: <path d="M3 2H13L19 7V22H3ZM3 12H19M3 17H19M8 2V22" fill="#bdbdbd" stroke="#a6a6a6" strokeWidth="1" /> },
  { name: 'Tools', more: '#000', icon: <><path d="M14 8L4 20" stroke="#111" strokeWidth="5" strokeLinecap="round" /><path d="M13 9L4 20" stroke="#2c4bc4" strokeWidth="2.5" strokeLinecap="round" /><path d="M3 5C6 1 11 1 14 3L22 9L21 13L16 10L13 11L10 6Z" fill="#555" stroke="#111" /></> },
];

const Bulb: React.FC = () => (
  <Glyph size="w-[14px] h-[19px] mx-auto" box="0 0 14 19">
    <path d="M7 1C3 1 1 4 1 6.500C1 9 4 11 4 14V16L7 18L10 16V14C10 11 13 9 13 6.500C13 4 11 1 7 1Z" fill="#fde894" stroke="#5d4a12" strokeWidth="1.2" />
    <path d="M4 14H10V16L7 18L4 16Z" fill="#777" />
  </Glyph>
);

const Lock: React.FC = () => (
  <Glyph size="w-[19px] h-[19px] mx-auto" box="0 0 19 19">
    <path d="M11 8V4C11 1 17 1 17 4V7" stroke="#222" strokeWidth="1.6" />
    <rect x="1.500" y="7.500" width="12" height="10.500" fill="url(#gold)" stroke="#5d4a12" />
  </Glyph>
);

const LayersPanel: React.FC = () => (
  <aside className="ml-[9px] flex w-[310px] shrink-0 flex-col pb-[10px]">
    <div className="flex h-[29px] items-center gap-2 pt-1 pl-1 text-base text-[#333]">
      <h2>Layers</h2>
      <div className="h-[3px] flex-1 border-y border-[#c6ccdc]" />
    </div>
    <div className="relative z-10 -mb-px flex h-[33px] items-center overflow-hidden">
      {panelTabs.map((t) => (
        <button
          key={t.name}
          aria-label={t.name}
          className={
            t.name === 'Layers'
              ? 'flex h-full w-[46px] shrink-0 items-center justify-center border border-b-0 border-[#bcc4d8] bg-[#eaebef] pt-1'
              : 'flex h-full w-[46px] shrink-0 items-center justify-center pt-1 first:w-[43px]'
          }
        >
          <Glyph size="w-[22px] h-[22px]" box="0 0 24 24">{t.icon}</Glyph>
        </button>
      ))}
      <button aria-label="Panel options" className="ml-3 flex h-full shrink-0 items-center pt-1"><Gear color="#c6cad8" /></button>
    </div>
    <div className="flex min-h-0 flex-1 flex-col overflow-hidden border border-[#bcc4d8]">
      <div className="flex h-[56px] shrink-0 items-center gap-[7px] overflow-hidden border-b border-[#c9cedb] pt-1 pl-[9px]">
        {layerTools.map((t) => (
          <button key={t.name} aria-label={t.name} className="shrink-0">
            <Glyph size="w-[26px] h-[26px]" box="0 0 26 26">
              {t.icon}
              {t.more && <path d="M25 18V24H19Z" fill={t.more} />}
            </Glyph>
          </button>
        ))}
        <button aria-label="Layer help" className="h-5 w-5 shrink-0 rounded-full bg-[#4a63d8]" />
      </div>
      <div className="mr-[5px] min-h-0 flex-1 overflow-hidden bg-white">
        <table className="w-full table-fixed border-collapse text-[17px] text-[#333]">
          <colgroup>
            <col className="w-[114px]" />
            <col className="w-[25px]" />
            <col className="w-[25px]" />
            <col className="w-[25px]" />
            <col className="w-[25px]" />
            <col className="w-20" />
            <col />
          </colgroup>
          <thead>
            <tr className="h-8 text-left text-base">
              <th className="border-r border-[#dfe3ec] pt-[2px] pl-[5px] font-normal">Layer</th>
              <th className="border-r border-[#dfe3ec]" />
              <th className="border-r border-[#dfe3ec]" />
              <th className="border-r border-[#dfe3ec]" />
              <th className="border-r border-[#dfe3ec]" />
              <th className="border-r border-[#dfe3ec] pt-[2px] pl-[6px] font-normal">Material</th>
              <th />
            </tr>
          </thead>
          <tbody>
            {layers.map((l) => (
              <tr key={l.name} className={l.current ? 'h-[29px] bg-[#839cea] text-base font-bold text-[#222b3c]' : 'h-[29px] border-b border-[#eceef2]'}>
                <td className="p-0 pt-[2px] pl-[10px] whitespace-nowrap">{l.name}</td>
                <td className="p-0">
                  {l.current && (
                    <Glyph size="w-5 h-5 mx-auto" box="0 0 20 20">
                      <path d="M1 11L7 16L19 4" stroke="#fff" strokeWidth="4" />
                      <path d="M1 11L7 16L19 4" stroke="#111" strokeWidth="2" />
                    </Glyph>
                  )}
                </td>
                <td className="p-0">{!l.current && <Bulb />}</td>
                <td className="p-0">{!l.current && <Lock />}</td>
                <td className="p-0">
                  <div className={`mx-auto h-[18px] w-[18px] border ${l.current ? 'border-white' : 'border-[#222]'} ${l.color}`} />
                </td>
                <td className="p-0 pl-1">
                  <div className={l.current ? 'h-[22px] w-[22px] rounded-full bg-[#fbfbfb]' : 'h-5 w-5 rounded-full bg-[#fafafa]'} />
                </td>
                <td className="overflow-hidden p-0">
                  <div className="ml-[6px] h-2 w-2 rounded-full bg-[#4a2a1c]" />
                </td>
              </tr>
            ))}
          </tbody>
        </table>
      </div>
      <div className="flex h-[26px] shrink-0 items-center bg-[#f0f0f0] pl-[26px]">
        <div className="h-[11px] w-[157px] bg-[#868686]" />
      </div>
    </div>
  </aside>
);

const OsnapBar: React.FC = () => (
  <section className="ml-[5px] flex h-[31px] shrink-0 items-center border-l border-[#c3cad8] pl-2 text-base text-[#333]">
    {snaps.map((s) => (
      <label key={s.name} className={`${s.width} flex shrink-0 items-center gap-[6px] whitespace-nowrap`}>
        <span className="relative flex">
          <input
            type="checkbox"
            defaultChecked={s.on}
            className={
              s.faint
                ? 'm-px h-[18px] w-[18px] appearance-none rounded border border-[#d5d5d8] bg-[#fbfbfb]'
                : 'h-5 w-5 appearance-none rounded border border-[#6b6b6b] bg-[#f3f3f3] checked:border-[#005fb8] checked:bg-[#005fb8]'
            }
          />
          {s.on && (
            <svg className="pointer-events-none absolute inset-0 h-5 w-5" viewBox="0 0 20 20" fill="none" aria-hidden="true">
              <path d="M5 10L8.500 13.500L15 7" stroke="#fff" strokeWidth="1.2" />
            </svg>
          )}
        </span>
        {s.name}
      </label>
    ))}
  </section>
);

const StatusBar: React.FC = () => (
  <footer className="flex h-7 shrink-0 border-t border-b-[3px] border-t-[#c0c6d6] border-b-[#b4c3ca] text-[17px] leading-7 text-[#333]">
    <div className="flex min-w-0 flex-1 divide-x divide-[#c0c6d6] overflow-hidden whitespace-nowrap">
      <button className="w-[69px] text-base leading-7">CPlane</button>
      <span className="w-32 text-center">x 24.513</span>
      <span className="w-32 text-center">y 22.819</span>
      <span className="w-32 text-center">z 0.000</span>
      <button className="w-32">Centimeters</button>
      <button className="flex w-[248px] items-center gap-[3px] pl-1">
        <span className="h-[17px] w-[17px] border border-[#222] bg-white" />
        linhas aux 2
      </button>
      <button className="w-[95px]">Grid Snap</button>
      <button className="w-16">Ortho</button>
      <button className="w-[65px]">Planar</button>
      <button className="w-[69px] bg-[#cdd6ee] font-bold text-[#222b3c]">Osnap</button>
      <button className="w-[105px]">SmartTrack</button>
      <button className="w-[83px]">Gumball</button>
      <button className="w-[135px]">Record History</button>
      <button className="w-[55px]">Filter</button>
      <span className="flex-1 pl-px">Available physical memory: 6503 MB</span>
      <span className="w-2" />
    </div>
  </footer>
);

const App: React.FC = () => {
  return (
    <div className="flex h-screen flex-col overflow-hidden bg-[#eaebef] font-['Open_Sans','Noto_Sans',sans-serif]">
      <Gradients />
      <TitleBar />
      <nav className="flex h-7 shrink-0 items-center gap-[21px] bg-white pt-[3px] pl-[11px] text-[17px] leading-6 text-black">
        {menus.map((m) => (
          <button key={m}>{m}</button>
        ))}
      </nav>
      <CommandArea />
      <Toolbars />
      <div className="mt-[5px] flex min-h-0 flex-1">
        <SideBar />
        <Viewport />
        <LayersPanel />
      </div>
      <OsnapBar />
      <StatusBar />
    </div>
  );
};

export default App;
